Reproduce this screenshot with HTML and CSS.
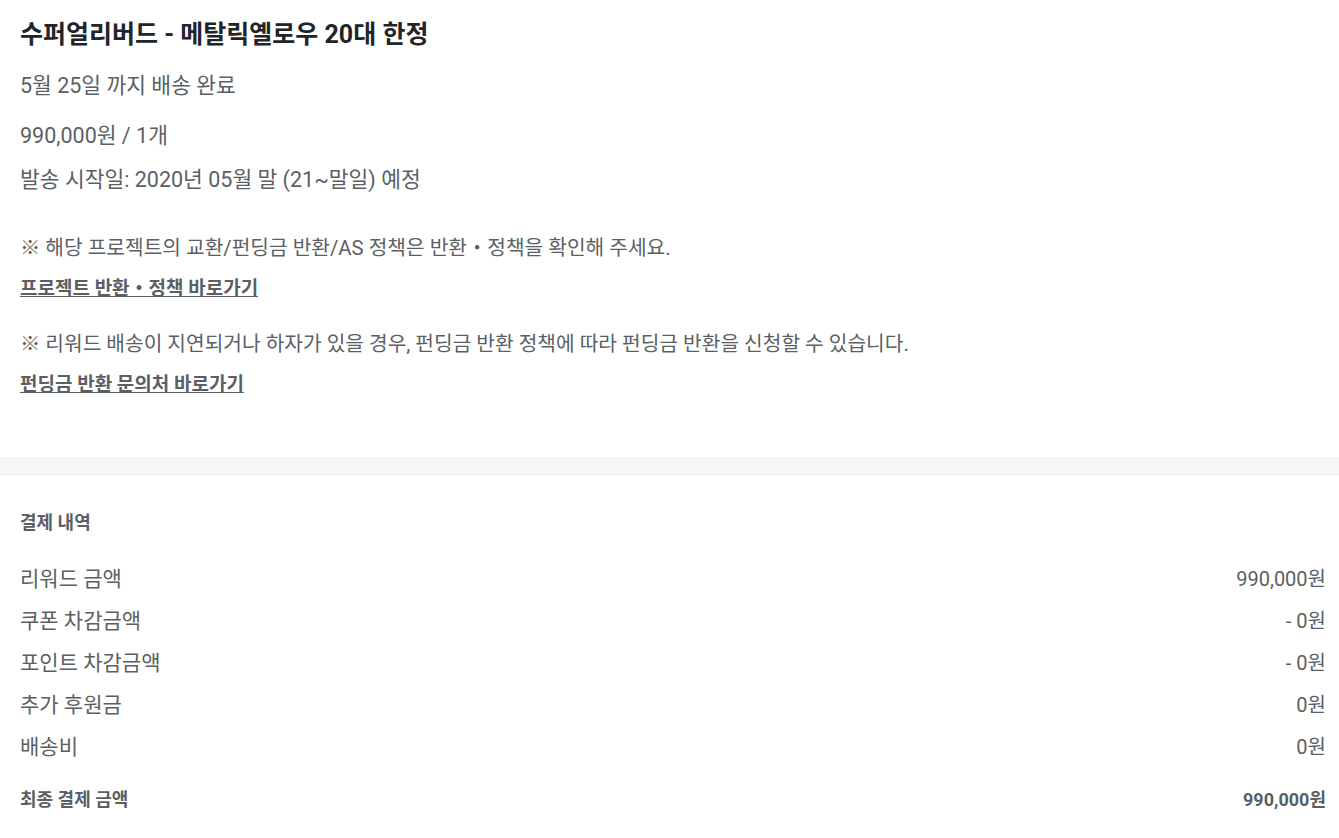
FILE: index.html
```html
<!DOCTYPE html>
<html lang="ko">
<head>
<meta charset="utf-8">
<link rel="stylesheet" href="styles.css">
</head>
<body>
<section class="reward">
  <h1 class="reward-title">수퍼얼리버드 - 메탈릭옐로우 20대 한정</h1>
  <p class="reward-info reward-ship">5월 25일 까지 배송 완료</p>
  <p class="reward-info reward-price">990,000원 / 1개</p>
  <p class="reward-info reward-date">발송 시작일: 2020년 05월 말 (21~말일) 예정</p>
  <p class="notice notice-first">※ 해당 프로젝트의 교환/펀딩금 반환/AS 정책은 반환・정책을 확인해 주세요.</p>
  <a class="notice-link" href="#">프로젝트 반환・정책 바로가기</a>
  <p class="notice">※ 리워드 배송이 지연되거나 하자가 있을 경우, 펀딩금 반환 정책에 따라 펀딩금 반환을 신청할 수 있습니다.</p>
  <a class="notice-link" href="#">펀딩금 반환 문의처 바로가기</a>
</section>
<div class="divider"></div>
<section class="payment">
  <h2 class="payment-title">결제 내역</h2>
  <ul class="payment-list">
    <li class="payment-row"><span class="payment-label">리워드 금액</span><span class="payment-value">990,000원</span></li>
    <li class="payment-row"><span class="payment-label">쿠폰 차감금액</span><span class="payment-value">- 0원</span></li>
    <li class="payment-row"><span class="payment-label">포인트 차감금액</span><span class="payment-value">- 0원</span></li>
    <li class="payment-row"><span class="payment-label">추가 후원금</span><span class="payment-value">0원</span></li>
    <li class="payment-row"><span class="payment-label">배송비</span><span class="payment-value">0원</span></li>
  </ul>
  <div class="payment-total"><span>최종 결제 금액</span><span>990,000원</span></div>
</section>
</body>
</html>
```
FILE: styles.css
```css
html, body {
  margin: 0;
  padding: 0;
  background: #fff;
}
body {
  font-family: Roboto, "Noto Sans CJK KR", sans-serif;
  color: #5b5f64;
  font-size: 20px;
}
p, h1, h2, ul {
  margin: 0;
  padding: 0;
}
.reward {
  padding: 20px 13px 62px 20px;
  display: flex;
  flex-direction: column;
  align-items: flex-start;
}
.reward-title {
  font-size: 25px;
  line-height: 30px;
  font-weight: 700;
  color: #212529;
}
.reward-info {
  font-size: 21.5px;
  line-height: 24px;
}
.reward-ship {
  margin-top: 24px;
}
.reward-price {
  margin-top: 26px;
}
.reward-date {
  margin-top: 20px;
}
.notice {
  margin-top: 31px;
  font-size: 20.3px;
  line-height: 24px;
}
.notice-first {
  margin-top: 44px;
}
.notice-link {
  margin-top: 17px;
  font-size: 19px;
  line-height: 24px;
  font-weight: 700;
  color: #5b5f64;
  text-decoration: underline;
}
.divider {
  height: 15px;
  margin-top: -1px;
  background: #f5f6f8;
  border-top: 1px solid #e9ecef;
  border-bottom: 1px solid #e9ecef;
}
.payment {
  padding: 38px 13px 30px 20px;
}
.payment-title {
  font-size: 18px;
  line-height: 20px;
  font-weight: 700;
  color: #5b5f64;
}
.payment-list {
  list-style: none;
  margin-top: 23px;
}
.payment-row {
  display: flex;
  justify-content: space-between;
  align-items: center;
  height: 42px;
}
.payment-label {
  font-size: 21px;
}
.payment-value {
  font-size: 20px;
}
.payment-total {
  display: flex;
  justify-content: space-between;
  align-items: center;
  margin-top: 11px;
  height: 42px;
  font-size: 18px;
  font-weight: 700;
}
```
